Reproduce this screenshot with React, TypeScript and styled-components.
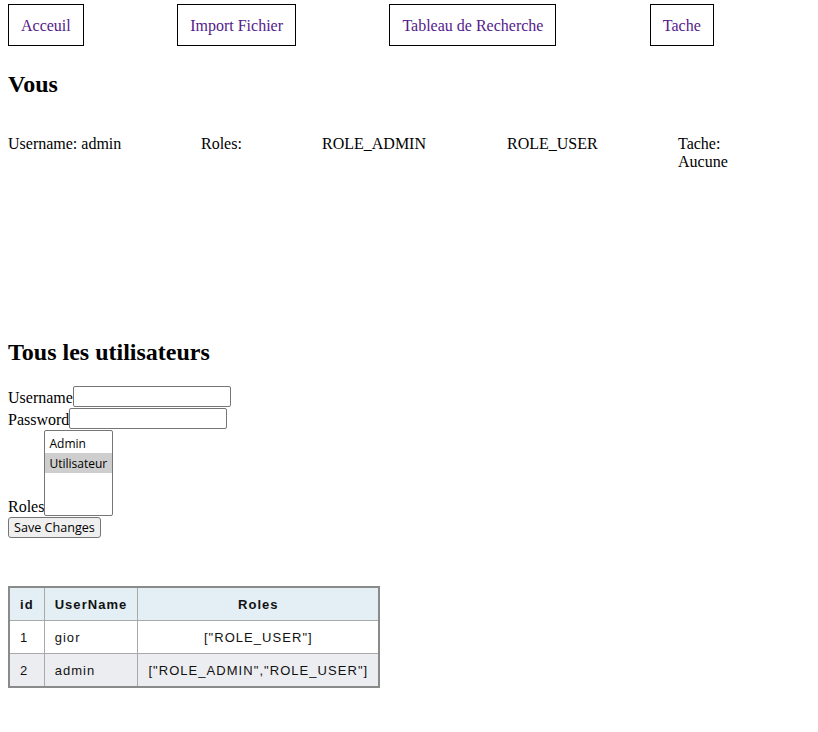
import styled, { createGlobalStyle } from 'styled-components';

type User = { id: number; username: string; roles: string[] };

const users: User[] = [
  { id: 1, username: 'gior', roles: ['ROLE_USER'] },
  { id: 2, username: 'admin', roles: ['ROLE_ADMIN', 'ROLE_USER'] },
];

const navLinks = ['Acceuil', 'Import Fichier', 'Tableau de Recherche', 'Tache'];

const GlobalStyle = createGlobalStyle`
  body {
    margin: 0;
    padding: 4px 8px 8px;
    font-family: "Liberation Serif", "Times New Roman", serif;
    font-size: 16px;
    color: #000;
    background: #fff;
  }
`;

const App = () => {
  return (
    <>
      <GlobalStyle />
      <Nav>
        {navLinks.map((label) => (
          <NavLink key={label} href="#">
            {label}
          </NavLink>
        ))}
      </Nav>

      <Heading>Vous</Heading>
      <ProfileRow>
        <ProfileCell>Username: admin</ProfileCell>
        <ProfileCell>Roles:</ProfileCell>
        <ProfileCell>ROLE_ADMIN</ProfileCell>
        <ProfileCell>ROLE_USER</ProfileCell>
        <ProfileCell $narrow>Tache: Aucune</ProfileCell>
      </ProfileRow>

      <Heading>Tous les utilisateurs</Heading>
      <Form onSubmit={(e) => e.preventDefault()}>
        <Field>
          Username
          <TextInput type="text" />
        </Field>
        <Field>
          Password
          <TextInput type="password" />
        </Field>
        <Field>
          Roles
          <RoleSelect multiple defaultValue={['user']}>
            <option value="admin">Admin</option>
            <option value="user">Utilisateur</option>
          </RoleSelect>
        </Field>
        <SaveButton type="submit">Save Changes</SaveButton>
      </Form>

      <UserTable>
        <thead>
          <tr>
            <HeadCell>id</HeadCell>
            <HeadCell>UserName</HeadCell>
            <HeadCell $center>Roles</HeadCell>
          </tr>
        </thead>
        <tbody>
          {users.map((user) => (
            <BodyRow key={user.id} $alt={user.id % 2 === 0}>
              <Cell>{user.id}</Cell>
              <Cell>{user.username}</Cell>
              <Cell $center>{JSON.stringify(user.roles)}</Cell>
            </BodyRow>
          ))}
        </tbody>
      </UserTable>
    </>
  );
};

export default App;

const Nav = styled.nav`
  display: flex;
  gap: 93.4px;
  align-items: flex-start;
`;

const NavLink = styled.a`
  display: block;
  padding: 12px 12px 10px;
  border: 1px solid #000;
  color: #551a8b;
  text-decoration: none;
  line-height: 18px;
`;

const Heading = styled.h2`
  font-size: 24px;
  font-weight: bold;
  margin: 24px 0 0;
  line-height: 28px;
`;

const ProfileRow = styled.div`
  display: grid;
  grid-template-columns: 193px 121px 185px 171px 60px;
  margin-top: 37px;
  height: 179px;
  line-height: 18px;
`;

const ProfileCell = styled.div<{ $narrow?: boolean }>`
  width: ${(p) => (p.$narrow ? '56px' : 'auto')};
`;

const Form = styled.form`
  display: flex;
  flex-direction: column;
  align-items: flex-start;
  margin-top: 20px;
`;

const Field = styled.label`
  display: flex;
  align-items: flex-end;
  line-height: 18px;
  margin-bottom: 1px;
`;

const TextInput = styled.input`
  width: 158px;
  height: 21px;
  box-sizing: border-box;
  border: 1px solid #767676;
  border-radius: 2px;
  padding: 1px 2px;
  font-size: 13px;
`;

const RoleSelect = styled.select`
  width: 69px;
  height: 86px;
  box-sizing: border-box;
  border: 1px solid #767676;
  border-radius: 2px;
  padding: 2px 0 0;
  font-family: "Open Sans", "DejaVu Sans", sans-serif;
  font-size: 12px;
  outline: none;

  option {
    padding: 2px 4px 1px;
  }

  option:checked {
    background: #cecece linear-gradient(#cecece, #cecece);
    color: #000;
  }
`;

const SaveButton = styled.button`
  height: 21px;
  padding: 1px 5px;
  background: #efefef;
  border: 1px solid #767676;
  border-radius: 3px;
  font-family: "Open Sans", "DejaVu Sans", sans-serif;
  font-size: 12.6px;
  color: #000;
`;

const UserTable = styled.table`
  margin-top: 48px;
  border-collapse: collapse;
  border: 2px solid #8a8a8a;
  font-family: "Liberation Sans", Arial, sans-serif;
  font-size: 13px;
  letter-spacing: 1.05px;
  color: #111;
`;

const HeadCell = styled.th<{ $center?: boolean }>`
  background: #e3eef5;
  border: 1px solid #a9a9a9;
  padding: 8px 10px;
  height: 16px;
  font-weight: bold;
  text-align: ${(p) => (p.$center ? 'center' : 'left')};
`;

const BodyRow = styled.tr<{ $alt: boolean }>`
  background: ${(p) => (p.$alt ? '#ecedf1' : '#fff')};
`;

const Cell = styled.td<{ $center?: boolean }>`
  border: 1px solid #a9a9a9;
  padding: 8px 10px;
  height: 16px;
  text-align: ${(p) => (p.$center ? 'center' : 'left')};
`;
